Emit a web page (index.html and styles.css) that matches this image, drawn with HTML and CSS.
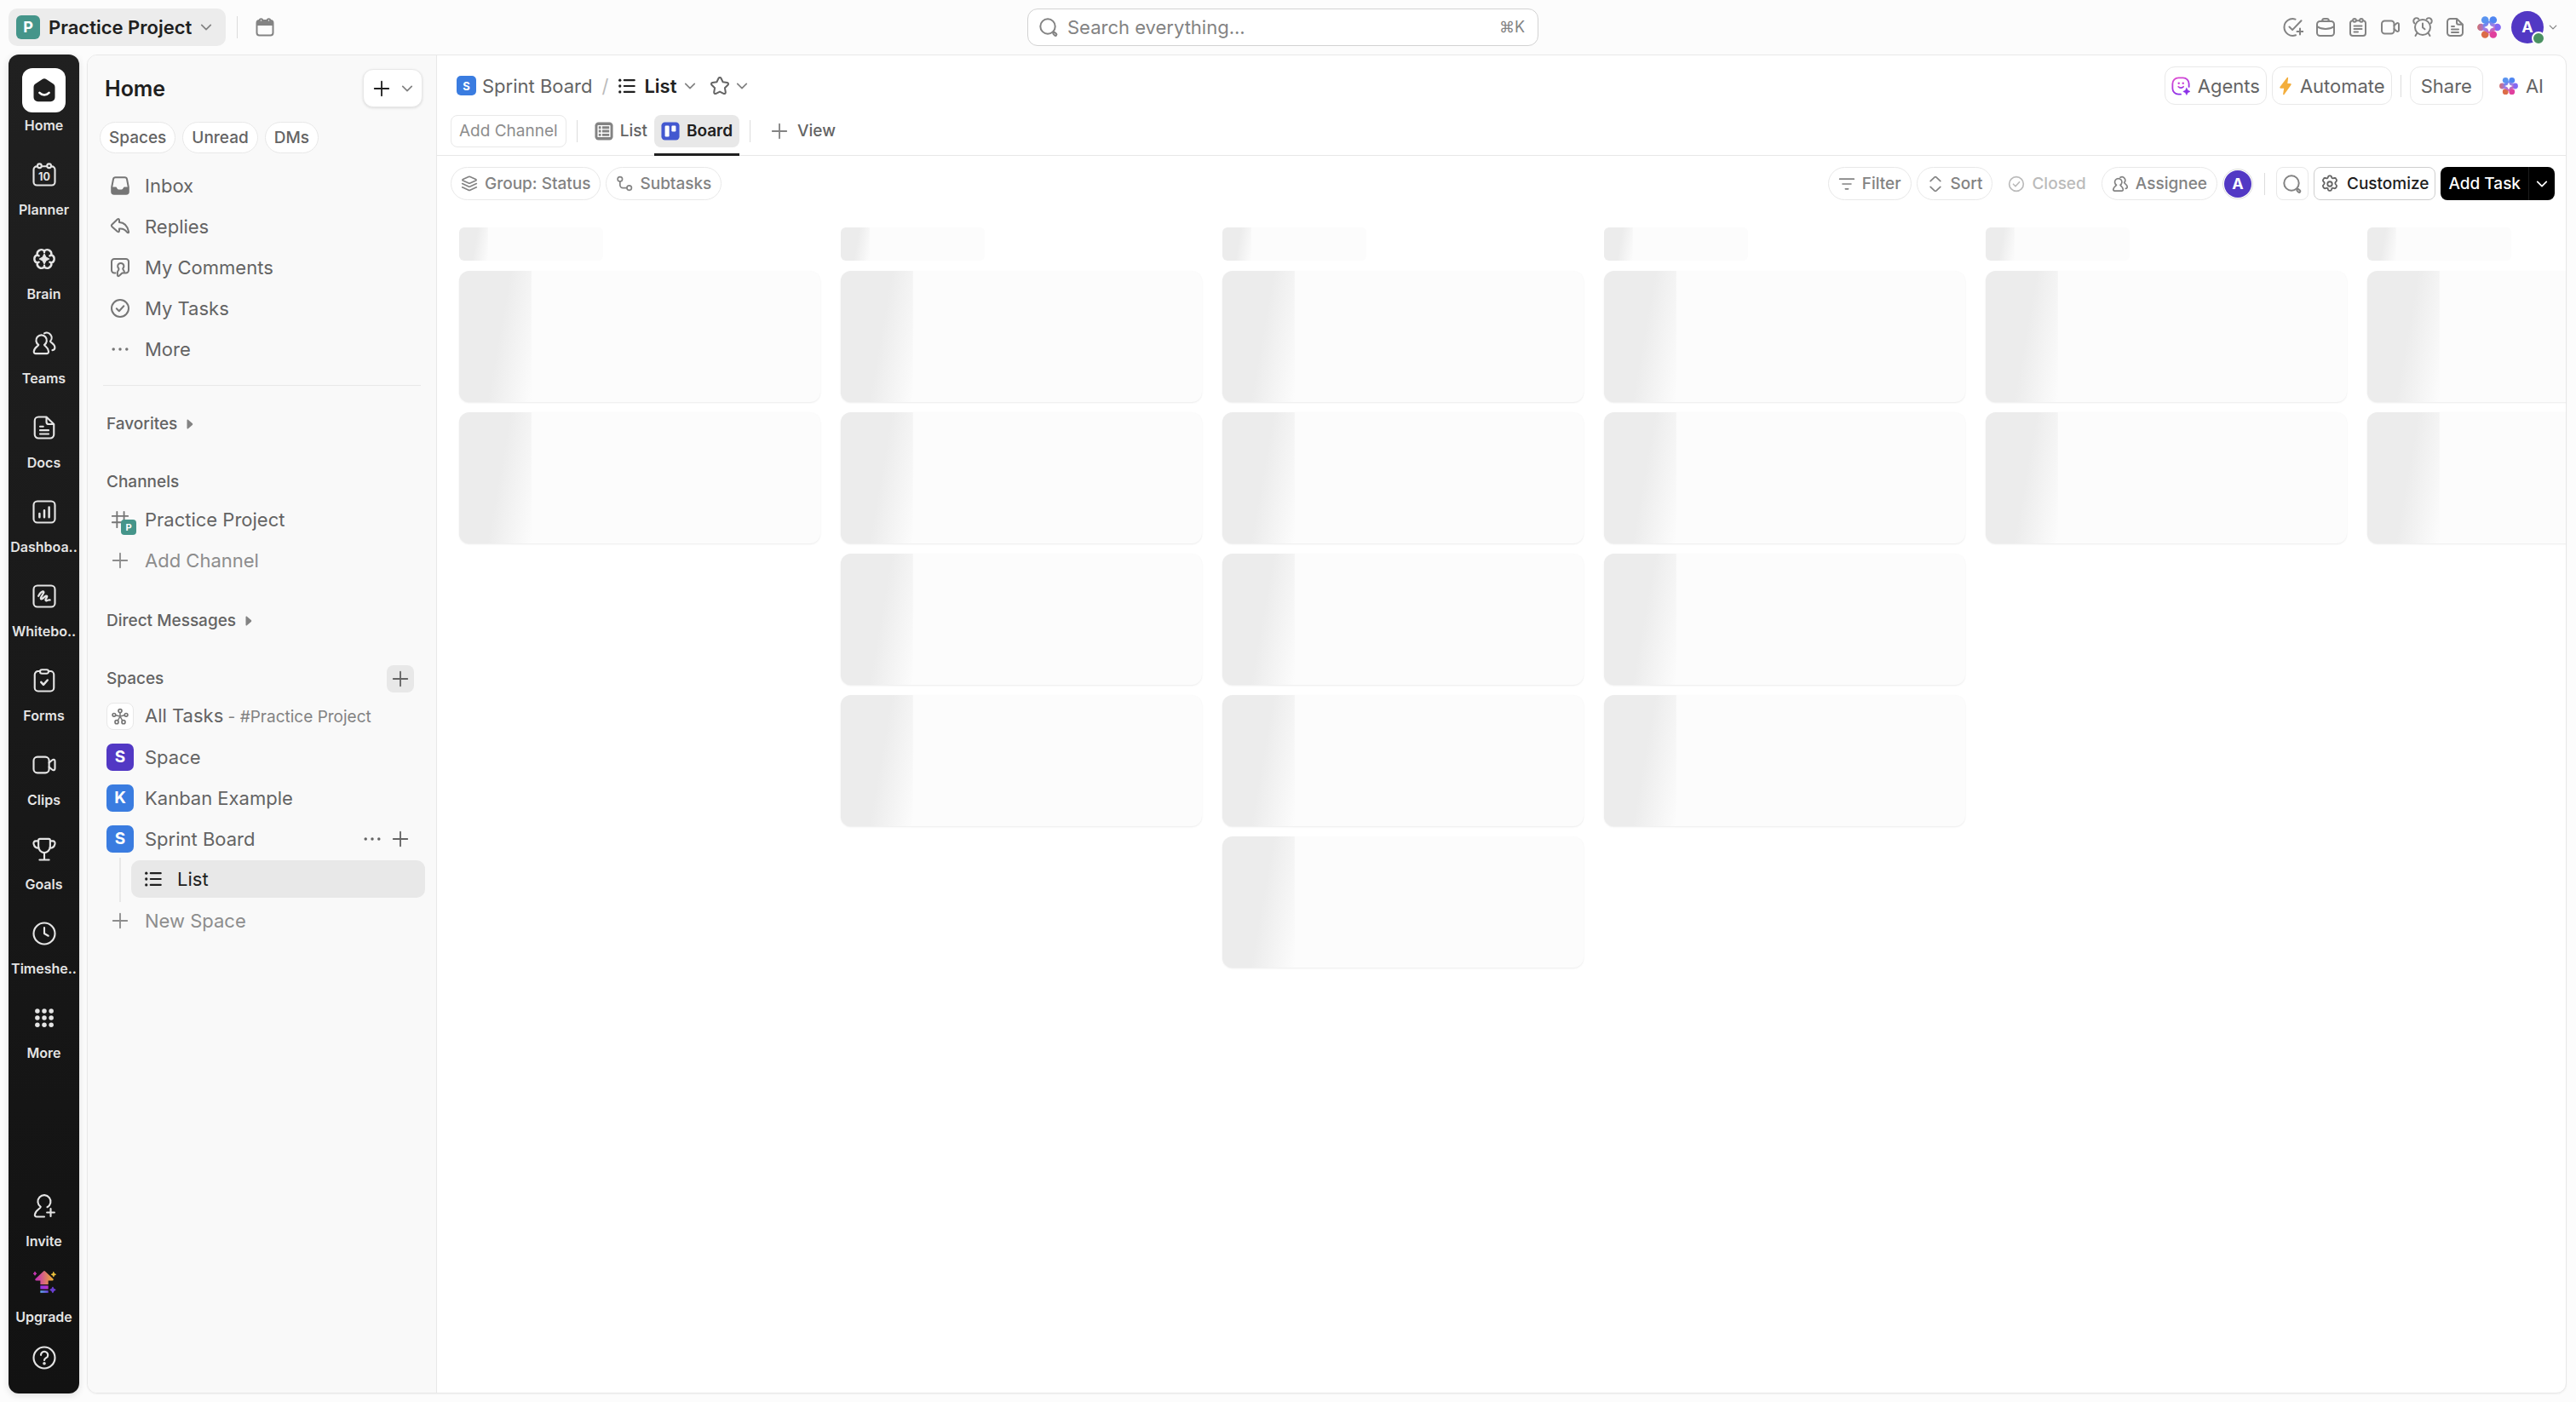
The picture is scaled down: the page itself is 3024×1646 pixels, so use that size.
FILE: index.html
```html
<!DOCTYPE html>
<html lang="en">
<head>
<meta charset="utf-8">
<meta name="viewport" content="width=device-width, initial-scale=1">
<title>Sprint Board | List</title>
<link rel="stylesheet" href="styles.css">
</head>
<body>
<svg class="sprite" aria-hidden="true">
  <defs>
    <linearGradient id="g-agent" x1="0" y1="0" x2="0.4" y2="1"><stop offset="0" stop-color="#e24bd0"/><stop offset="1" stop-color="#8b2fe8"/></linearGradient>
    <linearGradient id="g-up" x1="0" y1="0" x2="1" y2="0"><stop offset="0.1" stop-color="#c936b4"/><stop offset="1" stop-color="#edb02c"/></linearGradient>
    <linearGradient id="g-up2" x1="0" y1="0" x2="1" y2="0"><stop offset="0" stop-color="#8a3be0"/><stop offset="1" stop-color="#c02fc8"/></linearGradient>
    <linearGradient id="g-up3" x1="0" y1="0" x2="1" y2="0"><stop offset="0" stop-color="#5fa8e8"/><stop offset="1" stop-color="#6b3fe0"/></linearGradient>
    <linearGradient id="g-core" x1="0.3" y1="0" x2="0.7" y2="1"><stop offset="0" stop-color="#4f8df2"/><stop offset="0.5" stop-color="#a07fe6"/><stop offset="1" stop-color="#e0509a"/></linearGradient>
    <linearGradient id="g-left" x1="0" y1="0" x2="1" y2="0"><stop offset="0" stop-color="#d0706e"/><stop offset="1" stop-color="#a077e0"/></linearGradient>
  </defs>
  <symbol id="i-chevron" viewBox="0 0 24 24"><path d="M3 7.500l9 9 9-9"/></symbol>
  <symbol id="i-plus" viewBox="0 0 24 24"><path d="M12 3v18M3 12h18"/></symbol>
  <symbol id="i-dots" viewBox="0 0 24 24"><g fill="currentColor" stroke="none"><circle cx="3.500" cy="12" r="1.900"/><circle cx="12" cy="12" r="1.900"/><circle cx="20.500" cy="12" r="1.900"/></g></symbol>
  <symbol id="i-caret" viewBox="0 0 24 24"><path d="M5 2.500c0-1.600 1.500-2 2.600-1l10 8.600c1.200 1 1.200 2.800 0 3.800l-10 8.600c-1.100 1-2.600.6-2.600-1z" fill="currentColor" stroke="none"/></symbol>
  <symbol id="i-calendar" viewBox="0 0 24 24"><rect x="2.500" y="4" width="19" height="17.500" rx="3"/><path d="M2.500 10V7a3 3 0 013-3h13a3 3 0 013 3v3z" fill="currentColor" stroke="none"/><circle cx="7.500" cy="4" r="1.700" fill="#fcfcfc"/><circle cx="16.500" cy="4" r="1.700" fill="#fcfcfc"/></symbol>
  <symbol id="i-search" viewBox="0 0 24 24"><circle cx="11" cy="11" r="8.700"/><path d="M17.600 18.300a1 1 0 011.400-.4l1.900 1.700a1.300 1.300 0 01-1.800 1.900l-1.700-1.900a1 1 0 01.2-1.300z"/></symbol>
  <symbol id="i-home" viewBox="0 0 24 24"><path d="M10.200 1.600a3 3 0 013.600 0l6.700 4.300A3.500 3.500 0 0122 8.800V18.600a4 4 0 01-4 4H6a4 4 0 01-4-4V8.800a3.500 3.500 0 011.500-2.900z" fill="#1f1f1f" stroke="none"/><path d="M7.500 14.300c2.400 2.700 6.600 2.700 9 0" stroke="#fff" stroke-width="2"/></symbol>
  <symbol id="i-brain" viewBox="0 0 24 24"><path d="M18.600 8.200A4 4 0 0012 4.400 4 4 0 005.400 8.200a4 4 0 000 7.600 4 4 0 006.600 3.800 4 4 0 006.600-3.800 4 4 0 000-7.600z" stroke-width="1.900"/><path d="M12 4.400v1.400M12 18.200v1.400M5.400 8.200l1.500.9M17.100 14.900l1.500.9M18.600 8.200l-1.500.9M6.900 14.900l-1.500.9" stroke-width="1.900"/><path d="M12 7.500l1.500 3L16.500 12l-3 1.500-1.500 3-1.500-3-3-1.500 3-1.500z" fill="currentColor" stroke-width="1"/></symbol>
  <symbol id="i-teams" viewBox="0 0 24 24"><path d="M6.600 13.500a5 5 0 115.400 0c.5 1.300 3.800 2.400 4 6.200.1 1.300-.7 2-1.800 2H4c-1.100 0-1.900-.7-1.800-2 .3-3.800 3.900-4.900 4.400-6.200zM12 2.700a4.700 4.700 0 015.600 7.400c.6 1.700 4.200 2.300 4.300 5.900 0 1.400-.8 2.400-2.300 2.500"/></symbol>
  <symbol id="i-doc" viewBox="0 0 24 24"><path d="M14 2H6.500a3.500 3.500 0 00-3.500 3.500v13A3.500 3.500 0 006.500 22h11a3.500 3.500 0 003.500-3.500V8.800zM14 2v4.500a2.300 2.300 0 002.300 2.300H21M8 11h3M8 14.500h8M8 18h8"/></symbol>
  <symbol id="i-dash" viewBox="0 0 24 24"><rect x="2" y="2" width="20" height="20" rx="3.500"/><path d="M7.500 13.500v3.500M12 10.500v6.500M16.500 7.500v9.500" stroke-width="2"/></symbol>
  <symbol id="i-board" viewBox="0 0 24 24"><rect x="2" y="2" width="20" height="20" rx="3.500"/><path d="M6.500 11.800c1.200-2.200 2.800-4 4-4.300 1-.2 1.300.7.800 1.500-1 1.700-2.200 3.300-2.600 4.500-.3 1.100.5 1.400 1.300.9 1.300-.9 2.400-2.200 3.600-2.700.8-.3 1.200.3.900 1-.4.900-1.100 1.700-1.300 2.400-.2.900.4 1.300 1.200 1 .9-.3 1.700-.9 2.900-.6" stroke-width="1.800"/></symbol>
  <symbol id="i-form" viewBox="0 0 24 24"><path d="M8 3.200H6.200A3.200 3.200 0 003 6.400v12.400A3.200 3.200 0 006.200 22h11.600a3.200 3.200 0 003.200-3.200V6.400a3.200 3.200 0 00-3.200-3.200H16"/><rect x="8" y="1.800" width="8" height="3.600" rx="1.800"/><path d="M9 13.500l2.200 2.400L15 11.600" stroke-width="2"/></symbol>
  <symbol id="i-video" viewBox="0 0 24 24"><rect x="2" y="4.500" width="14.500" height="15" rx="3.500"/><path d="M16.500 10l2.800-2.400c1.200-1 2.700-.7 2.700 1v6.800c0 1.700-1.500 2-2.700 1L16.500 14"/></symbol>
  <symbol id="i-cup" viewBox="0 0 24 24"><path d="M6.500 3.500c0-.8.500-1.200 1.300-1.200h8.400c.8 0 1.300.4 1.300 1.200V9c0 4-2.700 6.300-5.500 6.300S6.500 13 6.500 9zM6.500 4.300H4C2.500 4.300 1.700 5.500 2 7c.5 2.500 2.600 4 5 4M17.500 4.300H20c1.500 0 2.300 1.200 2 2.700-.5 2.500-2.600 4-5 4M12 15.300V22M7.500 22h9"/></symbol>
  <symbol id="i-clock" viewBox="0 0 24 24"><circle cx="12" cy="12" r="10"/><path d="M12 6.500V12l3.800 2.200"/></symbol>
  <symbol id="i-grid" viewBox="0 0 24 24"><g fill="currentColor" stroke="none"><circle cx="5.500" cy="5.500" r="2.200"/><circle cx="12" cy="5.500" r="2.200"/><circle cx="18.500" cy="5.500" r="2.200"/><circle cx="5.500" cy="12" r="2.200"/><circle cx="12" cy="12" r="2.200"/><circle cx="18.500" cy="12" r="2.200"/><circle cx="5.500" cy="18.500" r="2.200"/><circle cx="12" cy="18.500" r="2.200"/><circle cx="18.500" cy="18.500" r="2.200"/></g></symbol>
  <symbol id="i-invite" viewBox="0 0 24 24"><path d="M14.800 13a6 6 0 10-6.200-.3c-.3 1.800-5 3.100-5.500 7.300-.2 1.200.6 2 1.700 2H12M18 14.500v7M14.500 18h7"/></symbol>
  <symbol id="i-help" viewBox="0 0 24 24"><circle cx="12" cy="12" r="10"/><path d="M8.800 9.500a3.300 3.300 0 116.200 1.600c-.8 1.100-3 1.400-3 3.200"/><circle cx="12" cy="17.400" r="0.600" fill="currentColor"/></symbol>
  <symbol id="i-upgrade" viewBox="0 0 24 24"><path d="M11 1.400a1.500 1.500 0 012 0l7.800 7.400c.8.800.4 1.900-.7 1.900H16V14.500H8v-3.800H3.900c-1.100 0-1.500-1.100-.7-1.900z" fill="url(#g-up)" stroke="none"/><path d="M8 15.700h8v3.600H8z" fill="url(#g-up2)" stroke="none"/><path d="M8 20.700h8v2.300H8z" fill="url(#g-up3)" stroke="none"/><path d="M2.600 2l.5 1.200 1.200.5-1.200.5-.5 1.200-.5-1.200L.9 3.700l1.200-.5z" stroke="#c936b4" fill="#c936b4" stroke-width="0.800"/><path d="M21.300 2l.8 1.700 1.700.8-1.700.8-.8 1.700-.8-1.700-1.700-.8 1.700-.8z" fill="#edc23c" stroke="#edc23c" stroke-width="0.500"/><path d="M20.500 17.400l.9 1.700 1.700.9-1.700.9-.9 1.700-.9-1.700-1.700-.9 1.700-.9z" fill="#6a3fd0" stroke="#6a3fd0" stroke-width="1"/></symbol>
  <symbol id="i-inbox" viewBox="0 0 24 24"><path d="M6.500 2.200h11c1.300 0 2.200.8 2.500 2.100l1.800 9.500V19a2.800 2.800 0 01-2.800 2.800H5A2.800 2.800 0 012.200 19v-5.200L4 4.300c.3-1.300 1.200-2.100 2.500-2.100z"/><path d="M2.200 13.500h5c1 0 1.300 3 3 3h3.600c1.700 0 2-3 3-3h5V19a2.800 2.800 0 01-2.800 2.800H5A2.800 2.800 0 012.200 19z" fill="currentColor" stroke="none"/></symbol>
  <symbol id="i-reply" viewBox="0 0 24 24"><path d="M11 4.600c0-1.500-1-2-2.200-1L2.600 9.400c-1 .9-1 1.900 0 2.800l6.200 5.600c1.200 1 2.200.5 2.200-1v-2.300c4-.4 7.200 1 9.200 4.200.7 1 2.300.9 1.800-.8C20.700 12 17 7.200 11 7z"/></symbol>
  <symbol id="i-comment" viewBox="0 0 24 24"><path d="M6.500 18.500H5.200a3.200 3.200 0 01-3.200-3.200V5.200A3.200 3.200 0 015.200 2h13.600A3.200 3.200 0 0122 5.200v10.100a3.200 3.200 0 01-3.200 3.200h-4.300l-3.600 3.200c-1 .8-2 .4-2-.8v-3.500c0-1.600 2.100-2 1.500-4.200a3.600 3.600 0 114.800 0c-.2 1.600 1.600 2 1.600 3.600"/></symbol>
  <symbol id="i-check" viewBox="0 0 24 24"><circle cx="12" cy="12" r="10"/><path d="M7.800 12.300l3 3 5.500-6"/></symbol>
  <symbol id="i-hash" viewBox="0 0 24 24"><path d="M8 2v20M17 2v20M2 7.500h20M2 15.500h20"/></symbol>
  <symbol id="i-hub" viewBox="0 0 24 24"><path d="M12 7.200V12l-6-1.500M12 12l6-1.500M12 12l-3 5.500M12 12l3 5.500" stroke-width="1.800"/><circle cx="12" cy="4.300" r="2.400"/><circle cx="3.500" cy="10" r="2.200"/><circle cx="20.500" cy="10" r="2.200"/><circle cx="7.200" cy="20" r="2.400"/><circle cx="16.800" cy="20" r="2.400"/></symbol>
  <symbol id="i-list" viewBox="0 0 24 24"><path d="M8.500 4.500h13M8.500 12h13M8.500 19.500h13" stroke-width="2.400"/><g fill="currentColor" stroke="none"><circle cx="3" cy="4.500" r="1.800"/><circle cx="3" cy="12" r="1.800"/><circle cx="3" cy="19.500" r="1.800"/></g></symbol>
  <symbol id="i-star" viewBox="0 0 24 24"><path d="M10.600 2.800c.6-1.200 2.200-1.200 2.800 0l2.200 4.500 5 .7c1.400.2 1.900 1.800.9 2.800l-3.600 3.500.9 4.900c.2 1.400-1.200 2.300-2.400 1.700L12 18.600l-4.400 2.300c-1.200.6-2.600-.3-2.400-1.700l.9-4.900-3.600-3.500c-1-1-.5-2.600.9-2.800l5-.7z"/></symbol>
  <symbol id="i-table" viewBox="0 0 24 24"><rect x="0.500" y="0.500" width="23" height="23" rx="4.500" fill="currentColor" stroke="none"/><path d="M4.500 5h15v14h-15zM4.500 9.700h15M4.500 14.400h15M9 5v14" stroke="#fff" stroke-width="1.500"/></symbol>
  <symbol id="i-kanban" viewBox="0 0 24 24"><rect x="0.500" y="0.500" width="23" height="23" rx="4.500" fill="#4358d0" stroke="none"/><rect x="5" y="5" width="5.500" height="14" rx="1.300" fill="#fff" stroke="none"/><rect x="13.500" y="5" width="5.500" height="7.500" rx="1.300" fill="#fff" stroke="none"/></symbol>
  <symbol id="i-layers" viewBox="0 0 24 24"><path d="M11 1.800a2.500 2.500 0 012 0l8 3.500c1 .5 1 1.500 0 2l-8 3.600a2.500 2.500 0 01-2 0L3 7.300c-1-.5-1-1.500 0-2zM2 11.500l9 4.200a2.500 2.500 0 002 0l9-4.200M2 16.500l9 4.200a2.500 2.500 0 002 0l9-4.200"/></symbol>
  <symbol id="i-sub" viewBox="0 0 24 24"><circle cx="5.800" cy="5.200" r="3.300"/><circle cx="18.800" cy="17.500" r="3.300"/><path d="M5.800 8.500v5a4 4 0 004 4h5.700"/></symbol>
  <symbol id="i-filter" viewBox="0 0 24 24"><path d="M2 5h20M6 12h12M10 19h4"/></symbol>
  <symbol id="i-sort" viewBox="0 0 24 24"><path d="M5 8l5.700-5.500a2 2 0 012.600 0L19 8M5 16l5.700 5.500a2 2 0 002.600 0L19 16"/></symbol>
  <symbol id="i-gear" viewBox="0 0 24 24"><circle cx="12" cy="12" r="3"/><path d="M9.700 3.200c.2-1 .8-1.700 1.800-1.700h1c1 0 1.600.7 1.800 1.700.2 1.400 1.200 2 2.600 1.400 1.600-.6 2.400-.4 3 .7l.7 1.200c.6 1 .4 1.800-.9 2.800-1.100.9-1.100 2.500 0 3.400 1.300 1 1.500 1.800.9 2.800l-.7 1.200c-.6 1.100-1.400 1.300-3 .7-1.400-.6-2.400 0-2.600 1.400-.2 1-.8 1.700-1.800 1.700h-1c-1 0-1.600-.7-1.800-1.700-.2-1.400-1.200-2-2.600-1.400-1.600.6-2.400.4-3-.7l-.7-1.200c-.6-1-.4-1.800.9-2.800 1.100-.9 1.100-2.500 0-3.400-1.300-1-1.500-1.800-.9-2.800l.7-1.200c.6-1.100 1.400-1.300 3-.7 1.400.6 2.400 0 2.600-1.400z"/></symbol>
  <symbol id="i-bolt" viewBox="0 0 16 24"><path d="M9.800 1.300c.8-1 1.800-.6 1.600.7L10.500 8.800H14c1.400 0 1.800 1 .9 2.100L6.500 22.700c-.8 1-1.800.6-1.600-.7L6 15H2c-1.400 0-1.800-1-.9-2.100z" fill="#f3ae3d" stroke="none"/></symbol>
  <symbol id="i-agent" viewBox="0 0 24 24"><g stroke="url(#g-agent)"><path d="M12 22.500H9A7.500 7.500 0 011.500 15V9A7.500 7.500 0 019 1.500h6A7.500 7.500 0 0122.500 9v4"/><path d="M9 12.800c1.600 2 4.800 2 6.400 0"/></g><g fill="#c83fd8" stroke="none"><circle cx="9.500" cy="8.500" r="1.300"/><circle cx="15" cy="8.500" r="1.300"/></g><path d="M19.500 14.500l1.500 3 3 1.500-3 1.500-1.500 3-1.500-3-3-1.500 3-1.500z" fill="#8b2fe8" stroke="#8b2fe8" stroke-width="0.600"/></symbol>
  <symbol id="i-ai" viewBox="0 0 24 24"><g stroke="none"><circle cx="7.900" cy="4.700" r="3.700" fill="#5a94f0"/><circle cx="16.100" cy="4.700" r="3.700" fill="#4f86f2"/><circle cx="3.800" cy="12" r="3.700" fill="url(#g-left)"/><circle cx="20.200" cy="12" r="3.700" fill="#8468f2"/><circle cx="7.900" cy="19.300" r="3.700" fill="#dc6c48"/><circle cx="16.100" cy="19.300" r="3.700" fill="#e0409e"/><path d="M12 5.500l6 3.500v6l-6 3.500L6 15V9z" fill="url(#g-core)"/><path d="M12 7l1.500 3.500L17 12l-3.500 1.500L12 17l-1.500-3.500L7 12l3.500-1.500z" fill="#fff"/></g></symbol>
  <symbol id="i-newtask" viewBox="0 0 24 24"><path d="M14.500 2.600A9.900 9.900 0 1015 21.200M7.500 11.500l3.600 3.600L21.500 4.200M20 13.500v7M16.500 17h7"/></symbol>
  <symbol id="i-case" viewBox="0 0 24 24"><rect x="2" y="5" width="20" height="17" rx="3.500"/><path d="M8 5c0-2 1.200-3 2.500-3h3C14.800 2 16 3 16 5M2 11c5.500 4 14.500 4 20 0"/></symbol>
  <symbol id="i-note" viewBox="0 0 24 24"><path d="M10.500 4.200h3M19 4.400a3 3 0 012 2.900V19a3 3 0 01-3 3H6a3 3 0 01-3-3V7.300a3 3 0 012-2.900M7.500 10.500h9M7.500 14h9M7.500 17.500H12"/><circle cx="8" cy="3.800" r="1.900"/><circle cx="16" cy="3.800" r="1.900"/></symbol>
  <symbol id="i-alarm" viewBox="0 0 24 24"><circle cx="12" cy="12" r="9"/><path d="M12 7.500v4.800l2.500 2M2.300 7.200a3.300 3.300 0 014.900-5M21.700 7.200a3.300 3.300 0 00-4.900-5M5.500 18.700L3.500 22M18.500 18.700l2 3.300"/></symbol>
</svg>

<header class="topbar">
  <div class="topbar-left">
    <button class="workspace" type="button"><span class="badge badge-28 teal">P</span>Practice Project<svg class="icon s14"><use href="#i-chevron"/></svg></button>
    <span class="vline"></span>
    <button class="bare muted" type="button" aria-label="Calendar"><svg class="icon s24"><use href="#i-calendar"/></svg></button>
  </div>
  <label class="search">
    <svg class="icon s24"><use href="#i-search"/></svg>
    <input type="text" placeholder="Search everything..." aria-label="Search everything">
    <kbd>⌘K</kbd>
  </label>
  <div class="topbar-right">
    <button class="bare muted" type="button" aria-label="New task"><svg class="icon s24"><use href="#i-newtask"/></svg></button>
    <button class="bare muted" type="button" aria-label="Work"><svg class="icon s24"><use href="#i-case"/></svg></button>
    <button class="bare muted" type="button" aria-label="Notepad"><svg class="icon s24"><use href="#i-note"/></svg></button>
    <button class="bare muted" type="button" aria-label="Record clip"><svg class="icon s24"><use href="#i-video"/></svg></button>
    <button class="bare muted" type="button" aria-label="Reminders"><svg class="icon s24"><use href="#i-alarm"/></svg></button>
    <button class="bare muted" type="button" aria-label="New doc"><svg class="icon s24"><use href="#i-doc"/></svg></button>
    <button class="bare" type="button" aria-label="AI"><svg class="icon s28"><use href="#i-ai"/></svg></button>
    <button class="account" type="button" aria-label="Account"><span class="avatar avatar-38">A<span class="presence"></span></span><svg class="icon s10"><use href="#i-chevron"/></svg></button>
  </div>
</header>

<div class="shell">
  <nav class="rail" aria-label="Apps">
    <a href="#" class="rail-item active"><span class="tile"><svg class="icon s30"><use href="#i-home"/></svg></span>Home</a>
    <a href="#" class="rail-item"><span class="tile"><svg class="icon s30" viewBox="0 0 24 24"><path d="M10 4.200h4M19 4.300a3 3 0 013 3V19a3 3 0 01-3 3H5a3 3 0 01-3-3V7.300a3 3 0 013-3"/><circle cx="7.500" cy="3.800" r="1.900"/><circle cx="16.500" cy="3.800" r="1.900"/><text x="12" y="17.300" text-anchor="middle" class="glyph-text">10</text></svg></span>Planner</a>
    <a href="#" class="rail-item"><span class="tile"><svg class="icon s30"><use href="#i-brain"/></svg></span>Brain</a>
    <a href="#" class="rail-item"><span class="tile"><svg class="icon s30"><use href="#i-teams"/></svg></span>Teams</a>
    <a href="#" class="rail-item"><span class="tile"><svg class="icon s30"><use href="#i-doc"/></svg></span>Docs</a>
    <a href="#" class="rail-item"><span class="tile"><svg class="icon s30"><use href="#i-dash"/></svg></span>Dashboa..</a>
    <a href="#" class="rail-item"><span class="tile"><svg class="icon s30"><use href="#i-board"/></svg></span>Whitebo..</a>
    <a href="#" class="rail-item"><span class="tile"><svg class="icon s30"><use href="#i-form"/></svg></span>Forms</a>
    <a href="#" class="rail-item"><span class="tile"><svg class="icon s30"><use href="#i-video"/></svg></span>Clips</a>
    <a href="#" class="rail-item"><span class="tile"><svg class="icon s30"><use href="#i-cup"/></svg></span>Goals</a>
    <a href="#" class="rail-item"><span class="tile"><svg class="icon s30"><use href="#i-clock"/></svg></span>Timeshe..</a>
    <a href="#" class="rail-item"><span class="tile"><svg class="icon s30"><use href="#i-grid"/></svg></span>More</a>
    <div class="rail-foot">
      <a href="#" class="rail-item"><span class="tile"><svg class="icon s30"><use href="#i-invite"/></svg></span>Invite</a>
      <a href="#" class="rail-item"><span class="tile"><svg class="icon s28"><use href="#i-upgrade"/></svg></span>Upgrade</a>
      <a href="#" class="rail-item" aria-label="Help"><span class="tile"><svg class="icon s30"><use href="#i-help"/></svg></span></a>
    </div>
  </nav>

  <div class="panel">
    <aside class="sidebar">
      <div class="side-head">
        <h1>Home</h1>
        <button class="create" type="button" aria-label="Create"><svg class="icon s22"><use href="#i-plus"/></svg><svg class="icon s14 muted"><use href="#i-chevron"/></svg></button>
      </div>
      <div class="chips">
        <button type="button" class="chip">Spaces</button>
        <button type="button" class="chip">Unread</button>
        <button type="button" class="chip">DMs</button>
      </div>
      <nav class="side-nav" aria-label="Home">
        <a href="#" class="row"><span class="slot"><svg class="icon s24"><use href="#i-inbox"/></svg></span>Inbox</a>
        <a href="#" class="row"><span class="slot"><svg class="icon s24"><use href="#i-reply"/></svg></span>Replies</a>
        <a href="#" class="row"><span class="slot"><svg class="icon s24"><use href="#i-comment"/></svg></span>My Comments</a>
        <a href="#" class="row"><span class="slot"><svg class="icon s24"><use href="#i-check"/></svg></span>My Tasks</a>
        <a href="#" class="row"><span class="slot"><svg class="icon s22"><use href="#i-dots"/></svg></span>More</a>
      </nav>
      <hr class="side-rule">
      <h2 class="group first">Favorites<svg class="icon s12"><use href="#i-caret"/></svg></h2>
      <h2 class="group">Channels</h2>
      <a href="#" class="row"><span class="slot"><svg class="icon s22"><use href="#i-hash"/></svg><span class="badge mini teal">P</span></span>Practice Project</a>
      <a href="#" class="row faint"><span class="slot"><svg class="icon s22"><use href="#i-plus"/></svg></span>Add Channel</a>
      <h2 class="group tight">Direct Messages<svg class="icon s12"><use href="#i-caret"/></svg></h2>
      <h2 class="group">Spaces<button type="button" class="add" aria-label="Add space"><svg class="icon s22"><use href="#i-plus"/></svg></button></h2>
      <a href="#" class="row"><span class="slot boxed"><svg class="icon s20"><use href="#i-hub"/></svg></span><span>All Tasks<small> - #Practice Project</small></span></a>
      <a href="#" class="row"><span class="badge badge-32 indigo">S</span>Space</a>
      <a href="#" class="row"><span class="badge badge-32 blue">K</span>Kanban Example</a>
      <div class="row">
        <a href="#" class="row-link"><span class="badge badge-32 blue">S</span>Sprint Board</a>
        <span class="row-tools">
          <button class="bare" type="button" aria-label="Space options"><svg class="icon s22"><use href="#i-dots"/></svg></button>
          <button class="bare" type="button" aria-label="Add to space"><svg class="icon s22"><use href="#i-plus"/></svg></button>
        </span>
      </div>
      <div class="branch"><a href="#" class="leaf"><svg class="icon s22"><use href="#i-list"/></svg>List</a></div>
      <a href="#" class="row faint"><span class="slot"><svg class="icon s22"><use href="#i-plus"/></svg></span>New Space</a>
    </aside>

    <main class="main">
      <div class="head">
        <div class="crumbs">
          <a href="#" class="crumb"><span class="badge badge-23 blue">S</span>Sprint Board</a>
          <span class="slash">/</span>
          <button type="button" class="crumb current"><svg class="icon s22"><use href="#i-list"/></svg>List<svg class="icon s14 muted"><use href="#i-chevron"/></svg></button>
          <button type="button" class="crumb fav" aria-label="Favorite"><svg class="icon s24"><use href="#i-star"/></svg><svg class="icon s14 muted"><use href="#i-chevron"/></svg></button>
        </div>
        <div class="head-actions">
          <button type="button" class="big-btn"><svg class="icon s22"><use href="#i-agent"/></svg>Agents</button>
          <button type="button" class="big-btn"><svg class="icon s22 bolt"><use href="#i-bolt"/></svg>Automate</button>
          <span class="vline"></span>
          <button type="button" class="big-btn share">Share</button>
          <button type="button" class="big-btn ai"><svg class="icon s22"><use href="#i-ai"/></svg>AI</button>
        </div>
      </div>
      <div class="tabs">
        <button type="button" class="add-channel">Add Channel</button>
        <span class="vline"></span>
        <a href="#" class="tab"><svg class="icon s22"><use href="#i-table"/></svg>List</a>
        <a href="#" class="tab selected"><svg class="icon s22"><use href="#i-kanban"/></svg>Board</a>
        <span class="vline"></span>
        <button type="button" class="tab view"><svg class="icon s22"><use href="#i-plus"/></svg>View</button>
      </div>
      <div class="tools">
        <button type="button" class="pill"><svg class="icon s20"><use href="#i-layers"/></svg>Group: Status</button>
        <button type="button" class="pill"><svg class="icon s20"><use href="#i-sub"/></svg>Subtasks</button>
        <div class="tools-right">
          <button type="button" class="pill"><svg class="icon s20"><use href="#i-filter"/></svg>Filter</button>
          <button type="button" class="pill"><svg class="icon s20"><use href="#i-sort"/></svg>Sort</button>
          <button type="button" class="pill ghost"><svg class="icon s20"><use href="#i-check"/></svg>Closed</button>
          <button type="button" class="pill"><svg class="icon s20"><use href="#i-teams"/></svg>Assignee</button>
          <button type="button" class="me" aria-label="My tasks"><span class="avatar avatar-32">A</span></button>
          <span class="vline"></span>
          <button type="button" class="square" aria-label="Search tasks"><svg class="icon s24"><use href="#i-search"/></svg></button>
          <button type="button" class="customize"><svg class="icon s22"><use href="#i-gear"/></svg>Customize</button>
          <div class="split"><button type="button">Add Task</button><button type="button" class="more" aria-label="More task types"><svg class="icon s14"><use href="#i-chevron"/></svg></button></div>
        </div>
      </div>
      <div class="board" aria-busy="true">
        <div class="column"><div class="bone title"></div><div class="bone card"></div><div class="bone card"></div></div>
        <div class="column"><div class="bone title"></div><div class="bone card"></div><div class="bone card"></div><div class="bone card"></div><div class="bone card"></div></div>
        <div class="column"><div class="bone title"></div><div class="bone card"></div><div class="bone card"></div><div class="bone card"></div><div class="bone card"></div><div class="bone card"></div></div>
        <div class="column"><div class="bone title"></div><div class="bone card"></div><div class="bone card"></div><div class="bone card"></div><div class="bone card"></div></div>
        <div class="column"><div class="bone title"></div><div class="bone card"></div><div class="bone card"></div></div>
        <div class="column"><div class="bone title"></div><div class="bone card"></div><div class="bone card"></div></div>
      </div>
    </main>
  </div>
</div>
</body>
</html>
```
FILE: styles.css
```css
*, *::before, *::after { box-sizing: border-box; }

:root {
  --text: #202020;
  --soft: #646464;
  --muted: #838383;
  --line: #e8e8e8;
  --indigo: #5238c4;
  --blue: #3a7ce0;
  --teal: #45958a;
}

body {
  margin: 0;
  min-height: 100vh;
  display: flex;
  flex-direction: column;
  background: #fcfcfc;
  color: var(--soft);
  font: 400 22px/28px Inter, "Liberation Sans", sans-serif;
}

button, input { font: inherit; color: inherit; background: none; border: 0; padding: 0; margin: 0; }
a { color: inherit; text-decoration: none; }
h1, h2 { margin: 0; }
button, .row, .rail-item, .tab, .crumb { white-space: nowrap; }

.sprite { position: absolute; width: 0; height: 0; }
.icon { flex: none; display: block; fill: none; stroke: currentColor; stroke-width: 2; stroke-linecap: round; stroke-linejoin: round; overflow: visible; }
.s10 { width: 10px; height: 10px; }
.s12 { width: 12px; height: 12px; }
.s14 { width: 14px; height: 14px; }
.s20 { width: 20px; height: 20px; }
.s22 { width: 22px; height: 22px; }
.s24 { width: 24px; height: 24px; }
.s28 { width: 28px; height: 28px; }
.s30 { width: 30px; height: 30px; }
.s10, .s14 { stroke-width: 3; }
.s30 { stroke-width: 1.7; }
.glyph-text { font: 700 10px Inter, sans-serif; fill: currentColor; stroke: none; }
.muted { color: var(--muted); }
.bare { display: flex; }
.vline { flex: none; width: 1px; height: 26px; background: #dcdcdc; }

.badge { flex: none; display: flex; align-items: center; justify-content: center; color: #fff; font-weight: 700; }
.badge-23 { width: 23px; height: 23px; border-radius: 5px; font-size: 13px; }
.badge-28 { width: 28px; height: 28px; border-radius: 6px; font-size: 18px; }
.badge-32 { width: 32px; height: 32px; border-radius: 7px; font-size: 19px; }
.teal { background: var(--teal); }
.indigo { background: var(--indigo); }
.blue { background: var(--blue); }
.avatar { position: relative; flex: none; display: flex; align-items: center; justify-content: center; border-radius: 50%; background: var(--indigo); color: #fff; font-weight: 700; }
.avatar-38 { width: 38px; height: 38px; font-size: 18px; }
.avatar-32 { width: 32px; height: 32px; font-size: 18px; }
.presence { position: absolute; right: -2px; bottom: -2px; width: 16px; height: 16px; border: 2px solid #fcfcfc; border-radius: 50%; background: #4a9162; }

/* Top bar */
.topbar { display: grid; grid-template-columns: 1fr minmax(200px, 600px) 1fr; align-items: center; height: 64px; padding: 0 22px 0 10px; }
.topbar-left, .topbar-right { display: flex; align-items: center; }
.topbar-right { justify-content: flex-end; gap: 14px; }
.workspace { display: flex; align-items: center; gap: 10px; height: 44px; padding: 0 16px 0 9px; margin-right: 13px; border-radius: 10px; background: #ececec; color: var(--text); font-weight: 600; }
.workspace .icon { color: var(--muted); }
.topbar-left .bare { margin-left: 20px; }
.search { display: flex; align-items: center; gap: 10px; height: 44px; padding: 0 15px 0 12px; border: 1px solid #d2d2d2; border-radius: 12px; background: #fff; color: var(--muted); }
.search input { flex: 1; min-width: 0; outline: 0; }
.search input::placeholder { color: var(--muted); opacity: 1; }
kbd { font: 400 18px/24px Inter, "Liberation Sans", sans-serif; }
.account { display: flex; align-items: center; gap: 6px; margin-left: -2px; color: var(--muted); }

/* Shell */
.shell { flex: 1; display: flex; gap: 9px; padding: 0 11px 10px 10px; }
.rail { flex: none; width: 83px; display: flex; flex-direction: column; gap: 22px; padding: 16px 0; border-radius: 12px; background: linear-gradient(#202020, #121212); box-shadow: 0 2px 8px rgba(0, 0, 0, .12); color: #e4e4e4; }
.rail-item { display: flex; flex-direction: column; align-items: center; gap: 5px; font-size: 16px; line-height: 20px; font-weight: 600; }
.tile { width: 51px; height: 52px; display: flex; align-items: center; justify-content: center; border-radius: 12px; }
.active .tile { background: #fff; }
.rail-foot { margin-top: auto; display: flex; flex-direction: column; gap: 12px; }

.panel { flex: 1; min-width: 0; display: flex; border: 1px solid var(--line); border-radius: 12px; background: #fff; overflow: hidden; box-shadow: 0 1px 2px rgba(0, 0, 0, .05); }

/* Sidebar */
.sidebar { flex: none; width: 410px; border-right: 1px solid var(--line); background: #f9f9f9; }
.side-head { display: flex; align-items: center; justify-content: space-between; padding: 16px 16px 17px 20px; }
.side-head h1 { font-size: 25px; line-height: 32px; font-weight: 600; color: var(--text); }
.create { display: flex; align-items: center; gap: 12px; height: 45px; padding: 0 10px; border: 1px solid var(--line); border-radius: 12px; background: #fff; color: var(--text); box-shadow: 0 1px 3px rgba(0, 0, 0, .12); }
.chips { display: flex; gap: 8px; padding: 0 14px 14px; }
.chip { height: 37px; padding: 0 10px; border: 1px solid var(--line); border-radius: 19px; background: #fff; font-size: 19px; font-weight: 500; line-height: 24px; }
.row { display: flex; align-items: center; gap: 13px; height: 48px; padding: 0 26px 0 22px; }
.row-link { display: flex; align-items: center; gap: 13px; }
.row-tools { display: flex; gap: 11px; margin-left: auto; padding-right: 5px; }
.row small { font-size: 19px; color: var(--muted); }
.slot { position: relative; flex: none; width: 32px; height: 32px; display: flex; align-items: center; justify-content: center; color: #767676; }
.boxed { border: 1px solid var(--line); border-radius: 8px; background: #fff; }
.mini { position: absolute; left: 17px; top: 16px; width: 18px; height: 18px; border-radius: 4px; font-size: 11px; line-height: 14px; }
.faint, .faint .slot { color: #8d8d8d; }
.side-rule { margin: 18px 18px 29px; border: 0; border-top: 1px solid var(--line); }
.group { display: flex; align-items: center; gap: 9px; height: 32px; margin: 36px 26px 4px 22px; font-size: 19px; font-weight: 500; line-height: 24px; }
.group.first { margin-top: 0; margin-bottom: 0; }
.group.tight { margin-top: 31px; margin-bottom: 0; }
.group .icon.s12 { color: var(--muted); }
.add { display: flex; align-items: center; justify-content: center; width: 32px; height: 32px; margin-left: auto; border-radius: 8px; background: #e8e8e8; }
.branch { margin: -2px 13px -2px 37px; padding: 3px 0 5px 12px; border-left: 2px solid var(--line); }
.leaf { display: flex; align-items: center; gap: 17px; height: 44px; padding: 0 15px; border-radius: 10px; background: #e8e8e8; color: var(--text); }

/* Main header */
.main { flex: 1; min-width: 0; }
.head { display: flex; align-items: center; justify-content: space-between; padding: 13px 13px 0 23px; }
.crumbs, .crumb, .head-actions { display: flex; align-items: center; }
.crumb { gap: 7px; }
.slash { margin: 0 11px; color: #bbb; }
.current { gap: 9px; font-weight: 600; color: var(--text); }
.fav { gap: 7px; margin-left: 16px; }
.big-btn { display: flex; align-items: center; gap: 9px; height: 45px; padding: 0 7px; margin-right: 6px; border: 1px solid var(--line); border-radius: 12px; }
.bolt { width: 16px; }
.head-actions .vline { margin: 0 10px 0 4px; }
.share { padding: 0 12px; }
.ai { border-color: transparent; padding: 0 8px 0 12px; margin-right: 4px; }

.tabs { display: flex; align-items: center; padding: 12px 16px 9px; border-bottom: 1px solid var(--line); font-size: 19px; line-height: 24px; font-weight: 500; }
.add-channel { height: 38px; padding: 0 9px; border: 1px solid var(--line); border-radius: 8px; color: #8d8d8d; font-weight: 400; }
.tabs .vline { margin: 0 12px; }
.tab { position: relative; display: flex; align-items: center; gap: 8px; height: 38px; padding: 0 8px; border-radius: 8px; }
.tab .icon { color: #838383; }
.selected { background: #e8e8e8; color: var(--text); font-weight: 600; }
.selected::after { content: ""; position: absolute; left: 0; right: 0; bottom: -10px; height: 3px; background: var(--text); }
.view { gap: 10px; padding-left: 11px; }

.tools { display: flex; align-items: center; gap: 6px; padding: 13px 13px 32px 16px; font-size: 19px; line-height: 24px; font-weight: 500; color: var(--muted); }
.tools-right { display: flex; align-items: center; gap: 6px; margin-left: auto; }
.pill { display: flex; align-items: center; gap: 8px; height: 39px; padding: 0 11px; border: 1px solid var(--line); border-radius: 20px; }
.ghost { border-color: transparent; color: #bbb; }
.me { padding: 1px; border: 1px solid #dcdcdc; border-radius: 50%; }
.tools .vline { margin: 0 7px; }
.square { display: flex; align-items: center; justify-content: center; width: 38px; height: 39px; border: 1px solid var(--line); border-radius: 8px; }
.customize { display: flex; align-items: center; gap: 9px; height: 39px; padding: 0 7px; border: 1px solid #cecece; border-radius: 8px; color: var(--text); }
.customize .icon { color: var(--soft); }
.split { display: flex; height: 39px; border-radius: 8px; background: #000; color: #fff; overflow: hidden; }
.split button { padding: 0 9px; }
.split .more { display: flex; align-items: center; padding: 0 8px; border-left: 1px solid #1c1c1c; }

/* Loading board */
.board { display: flex; gap: 24px; padding-left: 26px; overflow: hidden; }
.column { flex: none; width: 424px; display: flex; flex-direction: column; gap: 12px; padding-bottom: 4px; }
.bone { background: linear-gradient(100deg, #ececec 54%, #fcfcfc 100%) 0 0 / 20% 100% no-repeat #fcfcfc; }
.title { width: 169px; height: 39px; border-radius: 6px; }
.card { height: 154px; border-radius: 12px; box-shadow: 0 1px 2px rgba(0, 0, 0, .08); }
```
